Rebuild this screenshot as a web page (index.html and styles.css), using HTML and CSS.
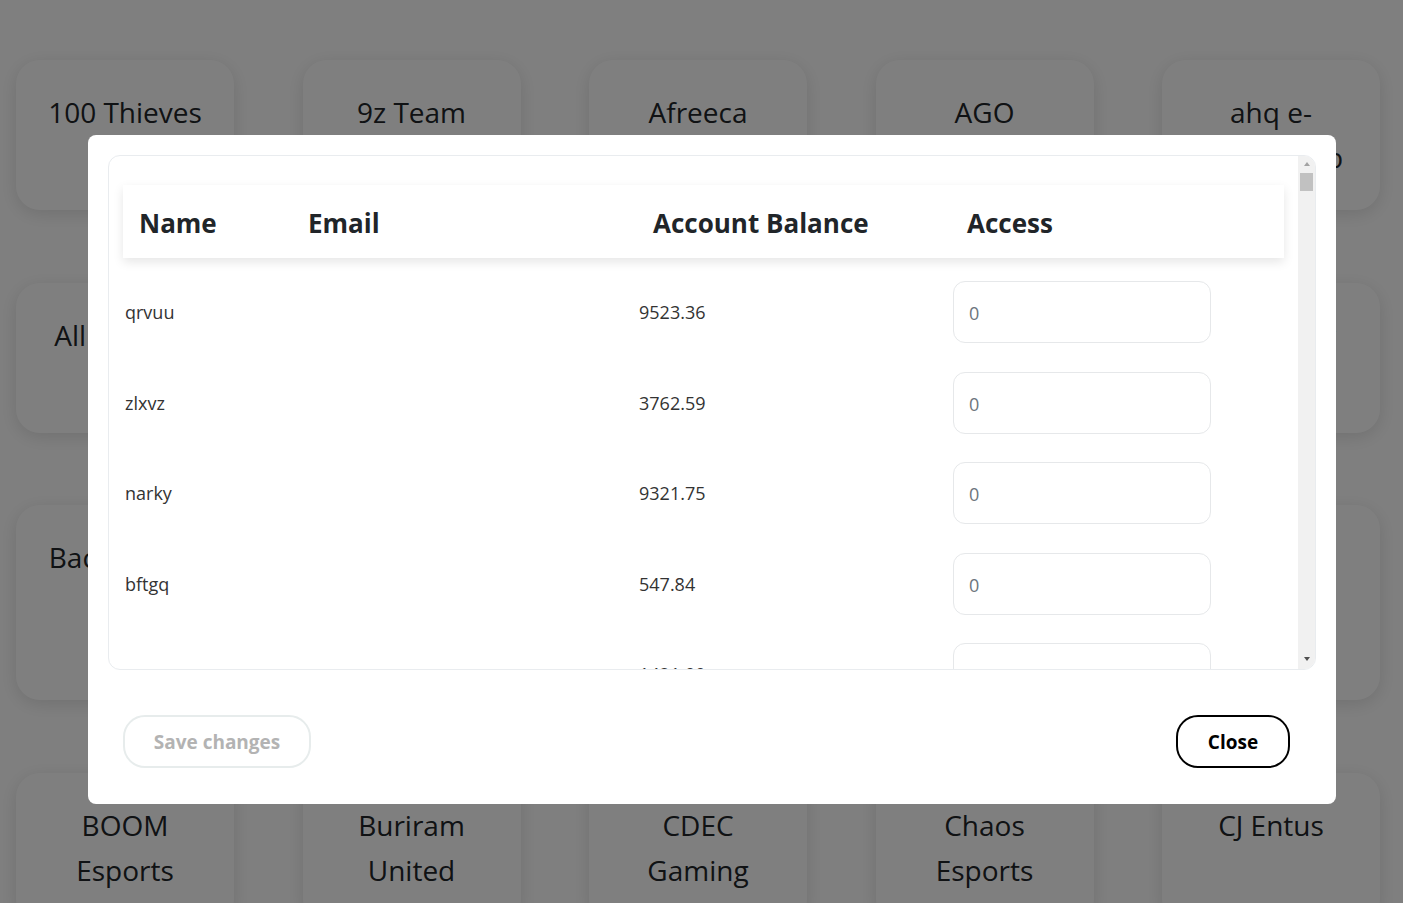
FILE: index.html
```html
<!DOCTYPE html>
<html lang="en">
<head>
<meta charset="utf-8">
<title>Teams</title>
<link rel="stylesheet" href="styles.css">
</head>
<body>
<main class="teams">
  <div class="team">100 Thieves</div>
  <div class="team">9z Team</div>
  <div class="team">Afreeca Freecs</div>
  <div class="team">AGO</div>
  <div class="team">ahq e-sports club</div>
  <div class="team">All Gamers</div>
  <div class="team">Alternate aTTaX</div>
  <div class="team">Astralis</div>
  <div class="team">Atlanta FaZe</div>
  <div class="team">Azure Ray</div>
  <div class="team">Bacon Time</div>
  <div class="team">Bad News Eagles</div>
  <div class="team">Beastcoast</div>
  <div class="team">Bilibili Gaming Pro Team</div>
  <div class="team">Big Time Regal e-Sports</div>
  <div class="team">BOOM Esports</div>
  <div class="team">Buriram United</div>
  <div class="team">CDEC Gaming</div>
  <div class="team">Chaos Esports</div>
  <div class="team">CJ Entus</div>
</main>

<div class="overlay">
  <div class="modal">
    <div class="modal-body">
      <div class="table-pane">
        <div class="table-head">
          <div class="cell">Name</div>
          <div class="cell">Email</div>
          <div class="cell">Account Balance</div>
          <div class="cell">Access</div>
        </div>
        <div class="rows">
          <div class="row"><div class="cell">qrvuu</div><div class="cell"></div><div class="cell">9523.36</div><div class="cell"><input class="access" type="text" placeholder="0"></div></div>
          <div class="row"><div class="cell">zlxvz</div><div class="cell"></div><div class="cell">3762.59</div><div class="cell"><input class="access" type="text" placeholder="0"></div></div>
          <div class="row"><div class="cell">narky</div><div class="cell"></div><div class="cell">9321.75</div><div class="cell"><input class="access" type="text" placeholder="0"></div></div>
          <div class="row"><div class="cell">bftgq</div><div class="cell"></div><div class="cell">547.84</div><div class="cell"><input class="access" type="text" placeholder="0"></div></div>
          <div class="row"><div class="cell">mwces</div><div class="cell"></div><div class="cell">1421.00</div><div class="cell"><input class="access" type="text" placeholder="0"></div></div>
          <div class="row"><div class="cell">tpwan</div><div class="cell"></div><div class="cell">6018.42</div><div class="cell"><input class="access" type="text" placeholder="0"></div></div>
        </div>
      </div>
      <div class="scrollbar" aria-hidden="true">
        <div class="sb-btn"><span class="arrow-up"></span></div>
        <div class="sb-thumb"></div>
        <div class="sb-space"></div>
        <div class="sb-btn"><span class="arrow-down"></span></div>
      </div>
    </div>
    <div class="modal-footer">
      <button class="btn btn-save" disabled>Save changes</button>
      <button class="btn btn-close">Close</button>
    </div>
  </div>
</div>
</body>
</html>
```

FILE: styles.css
```css
* { box-sizing: border-box; }

html, body {
  margin: 0;
  padding: 0;
  background: #ffffff;
  font-family: "Open Sans", "Noto Sans", sans-serif;
  color: #212529;
  overflow: hidden;
}

.teams {
  display: grid;
  grid-template-columns: repeat(5, 218px);
  column-gap: 68.5px;
  row-gap: 72.5px;
  padding: 60px 0 0 16px;
}

.team {
  background: #ffffff;
  border-radius: 24px;
  box-shadow: 0 4px 18px rgba(0, 0, 0, 0.12);
  padding: 30px 30px;
  font-size: 28px;
  line-height: 45px;
  text-align: center;
  color: #212529;
}

.overlay {
  position: fixed;
  inset: 0;
  background: rgba(0, 0, 0, 0.5);
  padding: 135px 0 0 88px;
}

.modal {
  width: 1248px;
  height: 669px;
  background: #ffffff;
  border-radius: 8px;
  padding: 20px;
  display: flex;
  flex-direction: column;
}

.modal-body {
  height: 515px;
  border: 1px solid #e9ecef;
  border-radius: 12px;
  overflow: hidden;
  display: flex;
}

.table-pane {
  flex: 1;
  overflow: hidden;
  padding: 29px 14px 0 14px;
}

.scrollbar {
  width: 17px;
  flex: none;
  background: #f1f1f1;
  display: flex;
  flex-direction: column;
}

.sb-btn {
  height: 16px;
  flex: none;
  display: flex;
  align-items: center;
  justify-content: center;
}

.arrow-up {
  width: 0;
  height: 0;
  border-left: 3.5px solid transparent;
  border-right: 3.5px solid transparent;
  border-bottom: 4px solid #a3a3a3;
}

.arrow-down {
  width: 0;
  height: 0;
  border-left: 3.5px solid transparent;
  border-right: 3.5px solid transparent;
  border-top: 4px solid #505050;
  margin-bottom: 4px;
}

.sb-thumb {
  height: 18px;
  margin: 1px 2px 0 2px;
  background: #c1c1c1;
  flex: none;
}

.sb-space { flex: 1; }

.table-head,
.row {
  display: grid;
  grid-template-columns: 169px 345px 314px 1fr;
  align-items: center;
}

.table-head {
  height: 73px;
  padding-left: 16px;
  padding-top: 2px;
  background: #ffffff;
  box-shadow: 0 4px 10px rgba(0, 0, 0, 0.1);
  font-size: 26px;
  font-weight: 700;
  color: #212529;
}

.rows {
  padding-top: 23px;
}

.row {
  height: 90.5px;
  padding-left: 2px;
  align-items: start;
  font-size: 18px;
  color: #333333;
}

.row .cell {
  line-height: 63px;
}

.access {
  display: block;
  width: 258px;
  height: 62px;
  border: 1px solid #e6e8ea;
  border-radius: 12px;
  padding: 2px 15px 0 15px;
  font-family: inherit;
  font-size: 18px;
  color: #333333;
  background: #ffffff;
  outline: none;
}

.access::placeholder { color: #6c757d; }

.modal-footer {
  display: flex;
  justify-content: space-between;
  align-items: center;
  padding: 45px 26px 0 15px;
}

.btn {
  height: 53px;
  border-radius: 22px;
  background: #ffffff;
  font-family: inherit;
  font-size: 19px;
  font-weight: 700;
  cursor: pointer;
}

.btn-save {
  width: 188px;
  border: 2px solid #e7ecec;
  color: #b3b3b3;
}

.btn-close {
  width: 114px;
  border: 2px solid #000000;
  color: #000000;
}
```
